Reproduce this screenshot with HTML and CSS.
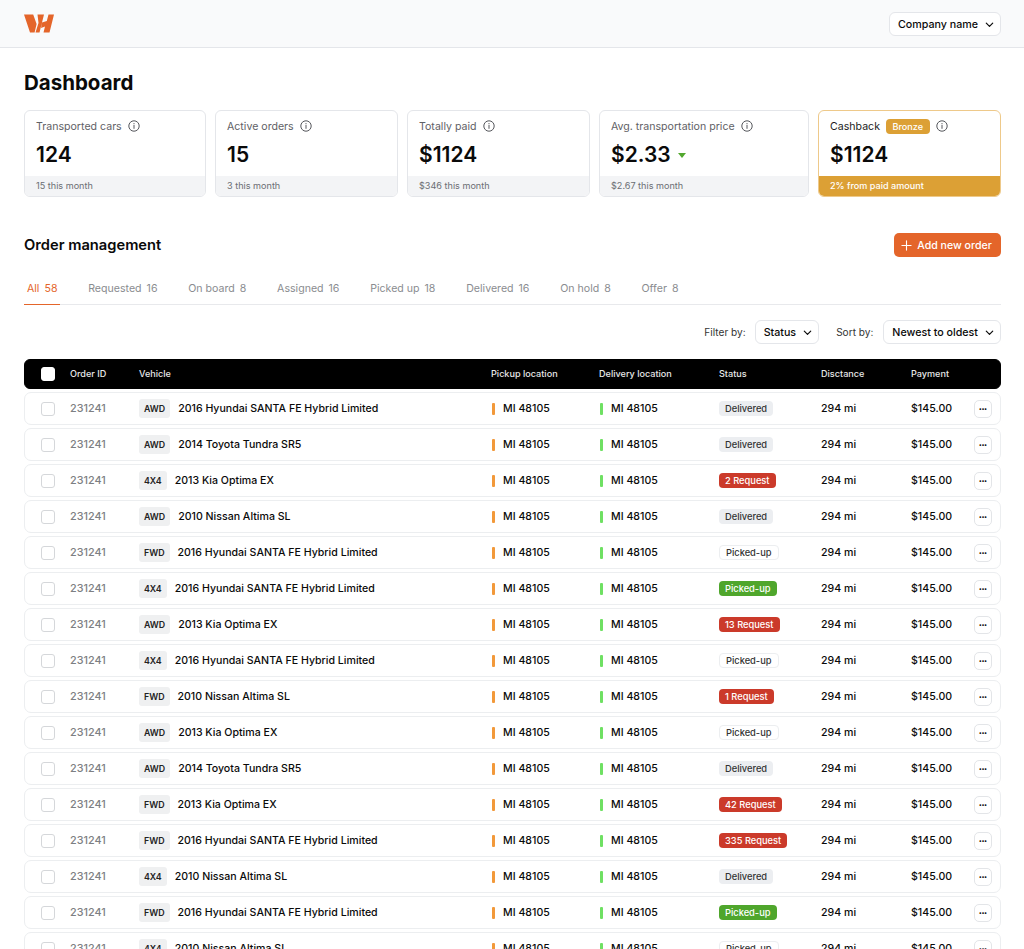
FILE: index.html
```html
<!DOCTYPE html>
<html lang="en">
<head>
<meta charset="utf-8">
<title>Dashboard</title>
<link rel="stylesheet" href="styles.css">
</head>
<body>
<svg class="defs" width="0" height="0" aria-hidden="true">
<symbol id="chev" viewBox="0 0 12 12"><path d="M2.5 4.500 6 8l3.500-3.500" fill="none" stroke="currentColor" stroke-width="1.300" stroke-linecap="round" stroke-linejoin="round"/></symbol>
<symbol id="info" viewBox="0 0 12 12"><circle cx="6" cy="6" r="5.200" fill="none" stroke="currentColor" stroke-width="1"/><path d="M6 5.400v3" stroke="currentColor" stroke-width="1" stroke-linecap="round"/><circle cx="6" cy="3.700" r=".6" fill="currentColor"/></symbol>
</svg>
<header class="topbar">
  <svg class="logo" viewBox="0 0 30 19" aria-label="Logo"><path fill="#e4652a" d="M0 .5h9.200l3.400 9.500-2 8.500H6zM13.500 .5H20l-4.500 18h-4l3-9.500zM24.500 .5H30l-4.500 18h-6l1.500-6-4 1.500 1-5.500 4.800-1.500z"/></svg>
  <button class="select"><span>Company name</span><svg class="chev"><use href="#chev"/></svg></button>
</header>
<main class="page">
  <h1 class="title">Dashboard</h1>
  <section class="cards">
    <article class="card">
      <div class="card-body"><div class="card-label">Transported cars <svg class="info"><use href="#info"/></svg></div><div class="card-value">124</div></div>
      <div class="card-foot">15 this month</div>
    </article>
    <article class="card">
      <div class="card-body"><div class="card-label">Active orders <svg class="info"><use href="#info"/></svg></div><div class="card-value">15</div></div>
      <div class="card-foot">3 this month</div>
    </article>
    <article class="card">
      <div class="card-body"><div class="card-label">Totally paid <svg class="info"><use href="#info"/></svg></div><div class="card-value">$1124</div></div>
      <div class="card-foot">$346 this month</div>
    </article>
    <article class="card card-wide">
      <div class="card-body"><div class="card-label">Avg. transportation price <svg class="info"><use href="#info"/></svg></div><div class="card-value">$2.33 <span class="down"></span></div></div>
      <div class="card-foot">$2.67 this month</div>
    </article>
    <article class="card card-gold">
      <div class="card-body"><div class="card-label">Cashback <span class="tier">Bronze</span> <svg class="info"><use href="#info"/></svg></div><div class="card-value">$1124</div></div>
      <div class="card-foot">2% from paid amount</div>
    </article>
  </section>
  <section class="section-head">
    <h2 class="subtitle">Order management</h2>
    <button class="add"><svg class="plus" viewBox="0 0 12 12"><path d="M6 1v10M1 6h10" stroke="currentColor" stroke-width="1.200" stroke-linecap="round"/></svg>Add new order</button>
  </section>
  <nav class="tabs">
    <a class="tab active">All<b>58</b></a>
    <a class="tab">Requested<b>16</b></a>
    <a class="tab">On board<b>8</b></a>
    <a class="tab">Assigned<b>16</b></a>
    <a class="tab">Picked up<b>18</b></a>
    <a class="tab">Delivered<b>16</b></a>
    <a class="tab">On hold<b>8</b></a>
    <a class="tab">Offer<b>8</b></a>
  </nav>
  <div class="filters">
    <span class="filter-label">Filter by:</span>
    <button class="select"><span>Status</span><svg class="chev"><use href="#chev"/></svg></button>
    <span class="filter-label sort">Sort by:</span>
    <button class="select"><span>Newest to oldest</span><svg class="chev"><use href="#chev"/></svg></button>
  </div>
  <div class="table">
    <div class="row head">
      <span class="check on"></span><span>Order ID</span><span>Vehicle</span><span>Pickup location</span><span>Delivery location</span><span>Status</span><span>Disctance</span><span>Payment</span><span></span>
    </div>
    <div class="row"><span class="check"></span><span class="id">231241</span><span class="veh"><i class="drive">AWD</i>2016 Hyundai SANTA FE Hybrid Limited</span><span class="loc pick">MI 48105</span><span class="loc drop">MI 48105</span><span><em class="st grey">Delivered</em></span><span>294 mi</span><span>$145.00</span><button class="more">•••</button></div>
    <div class="row"><span class="check"></span><span class="id">231241</span><span class="veh"><i class="drive">AWD</i>2014 Toyota Tundra SR5</span><span class="loc pick">MI 48105</span><span class="loc drop">MI 48105</span><span><em class="st grey">Delivered</em></span><span>294 mi</span><span>$145.00</span><button class="more">•••</button></div>
    <div class="row"><span class="check"></span><span class="id">231241</span><span class="veh"><i class="drive">4X4</i>2013 Kia Optima EX</span><span class="loc pick">MI 48105</span><span class="loc drop">MI 48105</span><span><em class="st red">2 Request</em></span><span>294 mi</span><span>$145.00</span><button class="more">•••</button></div>
    <div class="row"><span class="check"></span><span class="id">231241</span><span class="veh"><i class="drive">AWD</i>2010 Nissan Altima SL</span><span class="loc pick">MI 48105</span><span class="loc drop">MI 48105</span><span><em class="st grey">Delivered</em></span><span>294 mi</span><span>$145.00</span><button class="more">•••</button></div>
    <div class="row"><span class="check"></span><span class="id">231241</span><span class="veh"><i class="drive">FWD</i>2016 Hyundai SANTA FE Hybrid Limited</span><span class="loc pick">MI 48105</span><span class="loc drop">MI 48105</span><span><em class="st line">Picked-up</em></span><span>294 mi</span><span>$145.00</span><button class="more">•••</button></div>
    <div class="row"><span class="check"></span><span class="id">231241</span><span class="veh"><i class="drive">4X4</i>2016 Hyundai SANTA FE Hybrid Limited</span><span class="loc pick">MI 48105</span><span class="loc drop">MI 48105</span><span><em class="st green">Picked-up</em></span><span>294 mi</span><span>$145.00</span><button class="more">•••</button></div>
    <div class="row"><span class="check"></span><span class="id">231241</span><span class="veh"><i class="drive">AWD</i>2013 Kia Optima EX</span><span class="loc pick">MI 48105</span><span class="loc drop">MI 48105</span><span><em class="st red">13 Request</em></span><span>294 mi</span><span>$145.00</span><button class="more">•••</button></div>
    <div class="row"><span class="check"></span><span class="id">231241</span><span class="veh"><i class="drive">4X4</i>2016 Hyundai SANTA FE Hybrid Limited</span><span class="loc pick">MI 48105</span><span class="loc drop">MI 48105</span><span><em class="st line">Picked-up</em></span><span>294 mi</span><span>$145.00</span><button class="more">•••</button></div>
    <div class="row"><span class="check"></span><span class="id">231241</span><span class="veh"><i class="drive">FWD</i>2010 Nissan Altima SL</span><span class="loc pick">MI 48105</span><span class="loc drop">MI 48105</span><span><em class="st red">1 Request</em></span><span>294 mi</span><span>$145.00</span><button class="more">•••</button></div>
    <div class="row"><span class="check"></span><span class="id">231241</span><span class="veh"><i class="drive">AWD</i>2013 Kia Optima EX</span><span class="loc pick">MI 48105</span><span class="loc drop">MI 48105</span><span><em class="st line">Picked-up</em></span><span>294 mi</span><span>$145.00</span><button class="more">•••</button></div>
    <div class="row"><span class="check"></span><span class="id">231241</span><span class="veh"><i class="drive">AWD</i>2014 Toyota Tundra SR5</span><span class="loc pick">MI 48105</span><span class="loc drop">MI 48105</span><span><em class="st grey">Delivered</em></span><span>294 mi</span><span>$145.00</span><button class="more">•••</button></div>
    <div class="row"><span class="check"></span><span class="id">231241</span><span class="veh"><i class="drive">FWD</i>2013 Kia Optima EX</span><span class="loc pick">MI 48105</span><span class="loc drop">MI 48105</span><span><em class="st red">42 Request</em></span><span>294 mi</span><span>$145.00</span><button class="more">•••</button></div>
    <div class="row"><span class="check"></span><span class="id">231241</span><span class="veh"><i class="drive">FWD</i>2016 Hyundai SANTA FE Hybrid Limited</span><span class="loc pick">MI 48105</span><span class="loc drop">MI 48105</span><span><em class="st red">335 Request</em></span><span>294 mi</span><span>$145.00</span><button class="more">•••</button></div>
    <div class="row"><span class="check"></span><span class="id">231241</span><span class="veh"><i class="drive">4X4</i>2010 Nissan Altima SL</span><span class="loc pick">MI 48105</span><span class="loc drop">MI 48105</span><span><em class="st grey">Delivered</em></span><span>294 mi</span><span>$145.00</span><button class="more">•••</button></div>
    <div class="row"><span class="check"></span><span class="id">231241</span><span class="veh"><i class="drive">FWD</i>2016 Hyundai SANTA FE Hybrid Limited</span><span class="loc pick">MI 48105</span><span class="loc drop">MI 48105</span><span><em class="st green">Picked-up</em></span><span>294 mi</span><span>$145.00</span><button class="more">•••</button></div>
    <div class="row"><span class="check"></span><span class="id">231241</span><span class="veh"><i class="drive">4X4</i>2010 Nissan Altima SL</span><span class="loc pick">MI 48105</span><span class="loc drop">MI 48105</span><span><em class="st line">Picked-up</em></span><span>294 mi</span><span>$145.00</span><button class="more">•••</button></div>
  </div>
</main>
</body>
</html>
```
FILE: styles.css
```css
* { box-sizing: border-box; }
html, body { margin: 0; height: 100%; overflow: hidden; }
body { font-family: Inter, "Liberation Sans", sans-serif; color: #0a0a0a; background: #fff; font-size: 10.6px; }
.defs { position: absolute; }
button { font: inherit; color: inherit; }

.topbar { height: 48px; background: #f9fafb; border-bottom: 1px solid #e4e6ea; padding: 0 23px 0 24px; display: flex; align-items: center; justify-content: space-between; }
.topbar .select { padding-top: 1px; }
.logo { width: 30px; height: 19px; display: block; }
.select { height: 24px; padding: 0 5px 0 8px; display: inline-flex; align-items: center; gap: 6px; border: 1px solid #e4e6ea; border-radius: 6px; background: #fff; font-size: 10.7px; font-weight: 500; white-space: nowrap; }
.chev { width: 11px; height: 11px; }

.page { padding: 0 23px 0 24px; }
.title { margin: 21px 0 0; font-size: 20.5px; line-height: 27px; font-weight: 700; }

.cards { display: grid; grid-template-columns: 182px 183px 183px 210px 183px; column-gap: 9px; margin-top: 14px; }
.card { height: 87px; border: 1px solid #e4e6ea; border-radius: 6px; overflow: hidden; display: flex; flex-direction: column; background: #fff; }
.card-body { flex: 1; padding: 0 11px; }
.card-label { display: flex; align-items: center; gap: 6px; height: 30px; font-size: 10.6px; color: #5f6166; white-space: nowrap; }
.info { width: 12px; height: 12px; color: #55575c; }
.card-value { font-size: 21px; line-height: 27px; font-weight: 600; display: flex; align-items: center; gap: 7px; }
.down { width: 0; height: 0; border-left: 4px solid transparent; border-right: 4px solid transparent; border-top: 5px solid #52a82e; margin-top: 2px; }
.card-foot { height: 20px; padding: 0 11px; background: #f3f4f6; font-size: 9.1px; line-height: 20px; color: #6b6e73; }
.card-gold { border-color: #eec98a; }
.card-gold .card-label { color: #1c1c1c; }
.card-gold .card-foot { background: #dca035; color: #fff; font-weight: 500; }
.tier { background: #dca035; color: #fff; border-radius: 4px; font-size: 9.1px; font-weight: 500; line-height: 15px; padding: 0 6.5px; }

.section-head { display: flex; justify-content: space-between; align-items: center; margin-top: 36px; height: 24px; }
.subtitle { margin: 0; font-size: 14.7px; font-weight: 600; }
.add { height: 24px; width: 107px; padding: 0 2px 0 0; display: flex; align-items: center; justify-content: center; gap: 5px; border: 0; border-radius: 5px; background: #e4652a; color: #fff; font-size: 10.6px; font-weight: 500; white-space: nowrap; }
.plus { width: 11px; height: 11px; }

.tabs { display: flex; margin-top: 19px; height: 29px; border-bottom: 1px solid #e8e9ec; }
.tab { padding: 0 3px; margin-right: 24.75px; height: 29px; line-height: 26px; font-size: 10.6px; color: #8a8c90; }
.tab b { font-weight: 400; margin-left: 5px; }
.tab.active { color: #e4652a; border-bottom: 1px solid #e4652a; }

.filters { display: flex; justify-content: flex-end; align-items: center; margin-top: 15px; }
.filter-label { font-size: 10.1px; color: #333; margin-right: 9px; }
.sort { margin-left: 17px; margin-right: 10px; }

.table { margin-top: 15px; display: flex; flex-direction: column; gap: 3px; }
.row { height: 33px; display: grid; grid-template-columns: 29px 69px 352px 108px 120px 102px 90px 63px 18px; align-items: center; padding-left: 17px; border: 1px solid #eceef0; border-radius: 7px; font-size: 10.6px; font-weight: 500; }
.row > * { margin-left: -1px; }
.head { height: 30px; padding-bottom: 2px; background: #000; border-color: #000; border-radius: 6px; color: #e8e8e8; font-size: 9.1px; }
.head .check { margin-top: 2px; }
.check { width: 14px; height: 14px; border: 1px solid #d5d7da; border-radius: 3px; background: #fff; }
.check.on { border-color: #fff; }
.id { color: #7d7f83; font-size: 10.8px; }
.veh { display: flex; align-items: center; gap: 8px; }
.drive { font-style: normal; height: 19px; padding: 0 5px; line-height: 19px; background: #eff0f1; border-radius: 3px; font-size: 8.8px; font-weight: 600; color: #222; }
.row > .loc { display: flex; align-items: center; gap: 8px; margin-left: 0; }
.loc::before { content: ""; width: 3px; height: 12px; border-radius: 1px; background: #f2993a; }
.drop::before { background: #6fe063; }
.st { display: inline-block; font-style: normal; font-size: 9.3px; line-height: 15px; height: 15px; padding: 0 6px; border-radius: 4px; font-weight: 500; }
.grey { background: #eceef1; color: #333; }
.red { background: #cb3a2a; color: #fff; }
.green { background: #4fa62c; color: #fff; }
.line { background: #fff; color: #333; border: 1px solid #eceef0; line-height: 13px; }
.more { width: 18px; height: 18px; padding: 0; border: 1px solid #e3e5e8; border-radius: 5px; background: #fff; font-size: 5.5px; line-height: 14px; font-weight: 700; }
```
